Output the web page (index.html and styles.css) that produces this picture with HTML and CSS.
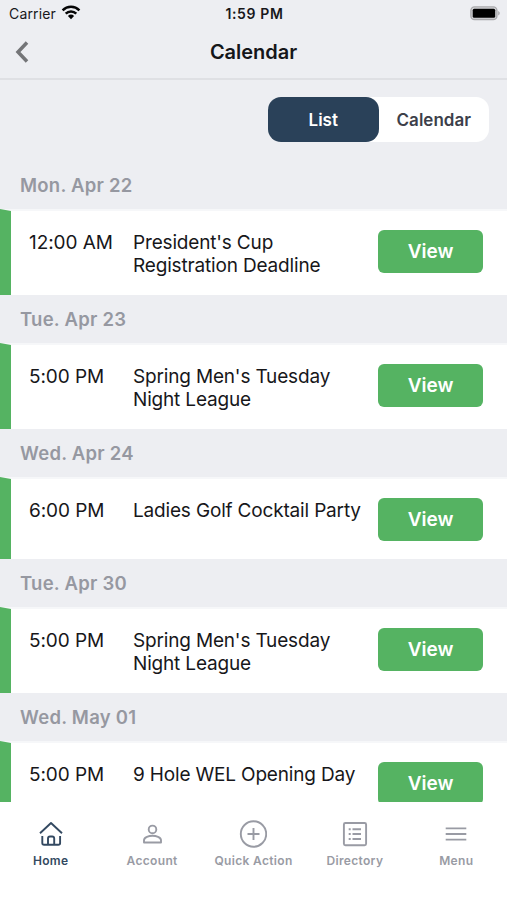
FILE: index.html
```html
<!DOCTYPE html>
<html lang="en">
<head>
<meta charset="utf-8">
<title>Calendar</title>
<link rel="stylesheet" href="styles.css">
</head>
<body>
<div class="app">
  <header class="top">
    <div class="status">
      <div class="carrier"><span>Carrier</span>
        <svg width="20" height="15" viewBox="0 0 20 15"><g fill="none" stroke="#050506" stroke-width="2.5"><path d="M1.6 5.3a12 12 0 0 1 16.8 0"/><path d="M4.7 8.6a7.6 7.6 0 0 1 10.6 0"/></g><path fill="#050506" d="M6.9 11a4.5 4.5 0 0 1 6.2 0L10 14.2z"/></svg>
      </div>
      <div class="clock">1:59 PM</div>
      <svg class="battery" width="30" height="15" viewBox="0 0 30 15"><rect x=".9" y=".9" width="26" height="12.6" rx="3.6" fill="#d5d5d8" stroke="#a9a9ac" stroke-width="1.4"/><rect x="2.7" y="2.7" width="22.5" height="9" rx="1.5" fill="#000"/><path d="M28.2 5c2 .9 2 3.500 0 4.500z" fill="#a9a9ac"/></svg>
    </div>
    <div class="nav">
      <svg class="back" width="14" height="22" viewBox="0 0 14 22"><path d="M12 1.500 3 11l9 9.500" fill="none" stroke="#747578" stroke-width="3.500"/></svg>
      <h1>Calendar</h1>
    </div>
  </header>
  <main class="list">
    <div class="switch"><span class="tab active">List</span><span class="tab">Calendar</span></div>
    <h2 class="first">Mon. Apr 22</h2>
    <section class="event"><time>12:00 AM</time><p>President's Cup<br>Registration Deadline</p><a class="view">View</a></section>
    <h2>Tue. Apr 23</h2>
    <section class="event"><time>5:00 PM</time><p>Spring Men's Tuesday<br>Night League</p><a class="view">View</a></section>
    <h2>Wed. Apr 24</h2>
    <section class="event short"><time>6:00 PM</time><p>Ladies Golf Cocktail Party</p><a class="view">View</a></section>
    <h2>Tue. Apr 30</h2>
    <section class="event"><time>5:00 PM</time><p>Spring Men's Tuesday<br>Night League</p><a class="view">View</a></section>
    <h2>Wed. May 01</h2>
    <section class="event"><time>5:00 PM</time><p>9 Hole WEL Opening Day</p><a class="view">View</a></section>
  </main>
  <footer class="tabs">
    <div class="item on"><svg width="28" height="28" viewBox="0 0 28 28"><path d="M3 13.200 14 3l11 10.200M5.300 16v7q0 1.800 1.800 1.800h14.200q1.800 0 1.800-1.800v-7M11 24.800v-6.300q0-2 2-2h2.200q2 0 2 2v6.300"/></svg><span>Home</span></div>
    <div class="item"><svg width="28" height="28" viewBox="0 0 28 28"><circle cx="14.500" cy="9.400" r="3.800"/><path d="M6 22.500v-2.200c0-3 5-4.500 8.500-4.500s8.500 1.500 8.500 4.500v2.200z"/></svg><span>Account</span></div>
    <div class="item"><svg width="28" height="28" viewBox="0 0 28 28"><circle cx="14.500" cy="14" r="12.700"/><path d="M14.500 8v12M8.500 14h12"/></svg><span>Quick Action</span></div>
    <div class="item"><svg width="28" height="28" viewBox="0 0 28 28"><rect x="2.900" y="3" width="22.200" height="22.200" rx="1.500"/><path d="M11.500 9.200H20M11.500 14H20M11.500 19H20M7.700 9.200h2M7.700 14h2M7.700 19h2"/></svg><span>Directory</span></div>
    <div class="item"><svg width="28" height="28" viewBox="0 0 28 28"><path d="M3.700 8.400h20.600M3.700 14h20.600M3.700 19.600h20.600"/></svg><span>Menu</span></div>
  </footer>
</div>
</body>
</html>
```
FILE: styles.css
```css
* { box-sizing: border-box; }
body { margin: 0; font-family: Inter, "Liberation Sans", sans-serif; background: #fff; }
h1, h2, p { margin: 0; }
svg { display: block; flex: none; }
.app { width: 507px; height: 900px; display: flex; flex-direction: column; overflow: hidden; }
.top { height: 80px; flex: none; background: #edeef2; border-bottom: 2px solid #dfe0e4; }
.status { height: 28px; display: grid; grid-template-columns: 1fr auto 1fr; align-items: center; padding: 0 7px 0 9px; color: #18181b; }
.carrier { display: flex; align-items: center; gap: 5px; font-size: 14px; letter-spacing: .15px; }
.carrier span, .clock { margin-top: -2px; }
.carrier svg { margin-top: -3px; }
.clock { font-size: 14px; font-weight: 600; letter-spacing: .65px; }
.battery { justify-self: end; margin-top: -1px; }
.nav { height: 50px; display: grid; grid-template-columns: 60px 1fr 60px; align-items: center; }
.back { margin: -2px 0 0 15px; }
.nav h1 { margin-top: -2px; font-size: 20px; font-weight: 600; text-align: center; color: #151619; letter-spacing: -.03px; }
.list { height: 722px; flex: none; overflow: hidden; background: #edeef2; }
.switch { width: 221px; height: 45px; margin: 17px 18px 0 auto; display: flex; background: #fff; border-radius: 13px; }
.tab { flex: 1; display: flex; align-items: center; justify-content: center; font-size: 17px; font-weight: 600; color: #3d3f4a; border-radius: 13px; }
.tab.active { background: #2a4159; color: #fff; }
h2 { height: 50px; line-height: 49px; padding-left: 20px; font-size: 18.500px; font-weight: 600; letter-spacing: .25px; color: #9698a1; border-bottom: 2px solid #f6f7f9; }
h2.first { margin-top: 19px; }
.event { height: 84px; display: grid; grid-template-columns: 104px 245px 105px; align-items: start; background: #fff; padding-left: 29px; position: relative; font-size: 19px; line-height: 23px; color: #17171a; }
.event::before { content: ""; position: absolute; left: 0; top: -2px; bottom: 0; width: 11px; background: #55b362; clip-path: polygon(0 0, 100% 2px, 100% 100%, 0 100%); }
.event.short { height: 80px; }
.event time, .event p { padding-top: 20px; white-space: nowrap; }
.event time { letter-spacing: -.08px; }
.event p { letter-spacing: -.17px; }
.view { height: 43px; margin-top: 19px; display: flex; align-items: center; justify-content: center; border-radius: 6px; background: #55b362; color: #fff; font-size: 19px; font-weight: 600; }
.tabs { height: 98px; flex: none; display: grid; grid-template-columns: repeat(5, 1fr); background: #fff; padding-top: 18px; }
.item { display: flex; flex-direction: column; align-items: center; color: #999ba4; font-size: 12px; font-weight: 600; letter-spacing: .33px; line-height: 15px; gap: 5px; white-space: nowrap; }
.item svg { fill: none; stroke: currentColor; stroke-width: 1.900; stroke-linejoin: round; }
.item.on { color: #334961; }
```
